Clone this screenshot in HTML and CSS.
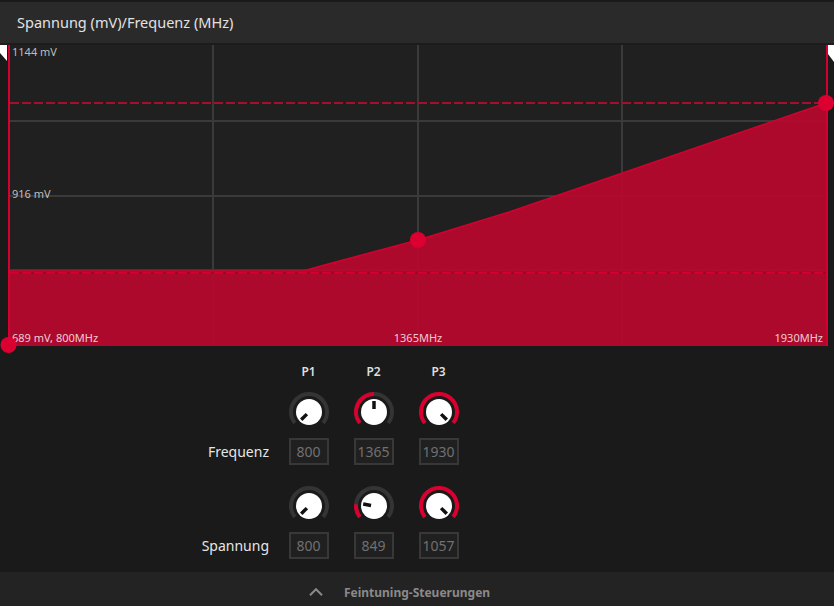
FILE: index.html
```html
<!DOCTYPE html>
<html lang="de">
<head>
<meta charset="utf-8">
<title>Spannung/Frequenz</title>
<link rel="stylesheet" href="styles.css">
</head>
<body>
<div class="page">
  <header class="header"><span class="title">Spannung (mV)/Frequenz (MHz)</span></header>

  <svg class="chart" width="834" height="301" viewBox="0 0 834 301">
    <rect x="8" y="0" width="820" height="301" fill="#202020"/>
    <rect x="212" y="0" width="2" height="301" fill="#3a3a3a"/>
    <rect x="417" y="0" width="2" height="301" fill="#3a3a3a"/>
    <rect x="621" y="0" width="2" height="301" fill="#3a3a3a"/>
    <rect x="10" y="75" width="816" height="2" fill="#3a3a3a"/>
    <rect x="10" y="150" width="816" height="2" fill="#3a3a3a"/>
    <rect x="10" y="224" width="816" height="2" fill="#3a3a3a"/>
    <text class="lbl" x="12" y="11">1144 mV</text>
    <text class="lbl" x="12" y="153">916 mV</text>
    <line x1="10" y1="58" x2="826" y2="58" class="dash-top"/>
    <polygon class="fill" points="10,226 303,226 330,218.5 418,195 510,166.7 826,58 826,301 10,301"/>
    <polyline class="edge" points="10,226 303,226 330,218.5 418,195 510,166.7 826,58"/>
    <line x1="10" y1="227.8" x2="826" y2="227.8" class="dash-under"/>
    <line x1="10" y1="227.8" x2="826" y2="227.8" class="dash-low"/>
    <rect x="8" y="0" width="2" height="301" fill="#d6002f"/>
    <rect x="826" y="0" width="2" height="301" fill="#d6002f"/>
    <polygon points="0,0 7,0 7,16 0,8" fill="#ffffff"/>
    <polygon points="828,0 834,0 834,17 828,9" fill="#ffffff"/>
    <text class="lbl lbl-red" x="12" y="296.5">689 mV, 800MHz</text>
    <text class="lbl lbl-red" x="418" y="296.5" text-anchor="middle">1365MHz</text>
    <text class="lbl lbl-red" x="823" y="296.5" text-anchor="end">1930MHz</text>
    <circle cx="418" cy="195" r="8" class="pt"/>
    <circle cx="826" cy="58" r="8" class="pt"/>
    <circle cx="8.5" cy="300" r="8" class="pt"/>
  </svg>

  <section class="controls">
    <div class="ctl-grid">
      <div></div>
      <div class="plabel">P1</div>
      <div class="plabel">P2</div>
      <div class="plabel">P3</div>

      <div></div>
      <div class="knob first">
        <svg width="44" height="44" viewBox="0 0 44 44">
          <path class="track" d="M7.82 33.08 A18 18 0 1 1 36.18 33.08"/>
          <circle cx="22" cy="22" r="13" class="cap"/>
          <line class="ptr" x1="19.88" y1="24.12" x2="14.22" y2="29.78"/>
        </svg>
      </div>
      <div class="knob first">
        <svg width="44" height="44" viewBox="0 0 44 44">
          <path class="track" d="M7.82 33.08 A18 18 0 1 1 36.18 33.08"/>
          <path class="prog" d="M7.82 33.08 A18 18 0 0 1 22 4"/>
          <circle cx="22" cy="22" r="13" class="cap"/>
          <line class="ptr" x1="22" y1="19" x2="22" y2="11"/>
        </svg>
      </div>
      <div class="knob first">
        <svg width="44" height="44" viewBox="0 0 44 44">
          <path class="prog" d="M7.82 33.08 A18 18 0 1 1 36.18 33.08"/>
          <circle cx="22" cy="22" r="13" class="cap"/>
          <line class="ptr" x1="24.12" y1="24.12" x2="29.78" y2="29.78"/>
        </svg>
      </div>

      <div class="rowlabel">Frequenz</div>
      <div class="valbox">800</div>
      <div class="valbox">1365</div>
      <div class="valbox">1930</div>

      <div></div>
      <div class="knob second">
        <svg width="44" height="44" viewBox="0 0 44 44">
          <path class="track" d="M7.82 33.08 A18 18 0 1 1 36.18 33.08"/>
          <circle cx="22" cy="22" r="13" class="cap"/>
          <line class="ptr" x1="19.88" y1="24.12" x2="14.22" y2="29.78"/>
        </svg>
      </div>
      <div class="knob second">
        <svg width="44" height="44" viewBox="0 0 44 44">
          <path class="track" d="M7.82 33.08 A18 18 0 1 1 36.18 33.08"/>
          <path class="prog" d="M7.82 33.08 A18 18 0 0 1 4.07 20.43"/>
          <circle cx="22" cy="22" r="13" class="cap"/>
          <line class="ptr" x1="19.05" y1="21.48" x2="11.17" y2="20.09"/>
        </svg>
      </div>
      <div class="knob second">
        <svg width="44" height="44" viewBox="0 0 44 44">
          <path class="prog" d="M7.82 33.08 A18 18 0 1 1 36.18 33.08"/>
          <circle cx="22" cy="22" r="13" class="cap"/>
          <line class="ptr" x1="24.12" y1="24.12" x2="29.78" y2="29.78"/>
        </svg>
      </div>

      <div class="rowlabel">Spannung</div>
      <div class="valbox">800</div>
      <div class="valbox">849</div>
      <div class="valbox">1057</div>
    </div>
  </section>

  <footer class="footer">
    <svg class="chev" width="14" height="8" viewBox="0 0 14 8">
      <polyline points="1,7.2 7,1.2 13,7.2" fill="none" stroke="#8a8a8a" stroke-width="2"/>
    </svg>
    <span class="foot-text">Feintuning-Steuerungen</span>
    <span></span>
  </footer>
</div>
</body>
</html>
```
FILE: styles.css
```css
* { box-sizing: border-box; }
html, body {
  margin: 0;
  padding: 0;
  background: #1a1a1a;
  width: 834px;
  height: 606px;
  overflow: hidden;
  font-family: "Noto Sans", "DejaVu Sans", sans-serif;
}
.page {
  width: 834px;
  height: 606px;
  display: flex;
  flex-direction: column;
}
.header {
  flex: none;
  margin-top: 2px;
  height: 43px;
  background: #2a2a2a;
  border-bottom: 2px solid #1c1c1c;
  display: flex;
  align-items: center;
  padding-left: 17px;
  padding-bottom: 1px;
}
.title {
  color: #e2e2e2;
  font-size: 14.5px;
}
.chart {
  display: block;
  overflow: visible;
  flex: none;
}
.lbl {
  font-family: "Noto Sans", "DejaVu Sans", sans-serif;
  font-size: 11px;
  fill: #bdbdbd;
}
.lbl-red { fill: rgba(255, 255, 255, 0.8); }
.fill { fill: rgba(184, 8, 45, 0.93); }
.edge { fill: none; stroke: #d4002f; stroke-width: 1.5; }
.dash-top { stroke: #a3102e; stroke-width: 2; stroke-dasharray: 9 3; }
.dash-under { stroke: #8e0a26; stroke-width: 2; }
.dash-low { stroke: #d6002f; stroke-width: 2; stroke-dasharray: 9 3; }
.pt { fill: #dc0031; }

.controls {
  height: 226px;
  padding-top: 18px;
  flex: none;
}
.ctl-grid {
  display: grid;
  grid-template-columns: 276px 65px 65px 65px;
}
.plabel {
  justify-self: center;
  height: 16px;
  line-height: 16px;
  font-size: 12px;
  font-weight: 600;
  color: #dedede;
}
.knob {
  justify-self: center;
  width: 44px;
  height: 44px;
}
.knob svg { display: block; }
.knob.first { margin-top: 10px; }
.knob.second { margin-top: 19px; }
.track { fill: none; stroke: #343434; stroke-width: 4; }
.prog { fill: none; stroke: #d9002f; stroke-width: 4; }
.cap { fill: #ffffff; }
.ptr { stroke: #111111; stroke-width: 3.5; }
.rowlabel {
  margin-top: 4px;
  align-self: center;
  justify-self: end;
  padding-right: 7px;
  color: #e6e6e6;
  font-size: 14px;
}
.valbox {
  justify-self: center;
  margin-top: 4px;
  width: 40px;
  height: 27px;
  border: 2px solid #383838;
  background: #202020;
  color: #707070;
  font-size: 14px;
  line-height: 23px;
  text-align: center;
}
.footer {
  flex: none;
  height: 40px;
  background: #232323;
  display: grid;
  grid-template-columns: 1fr auto 1fr;
  align-items: center;
}
.chev {
  justify-self: end;
  margin-right: 21px;
  display: block;
}
.foot-text {
  color: #8a8a8a;
  font-size: 12px;
  font-weight: 700;
}
```
